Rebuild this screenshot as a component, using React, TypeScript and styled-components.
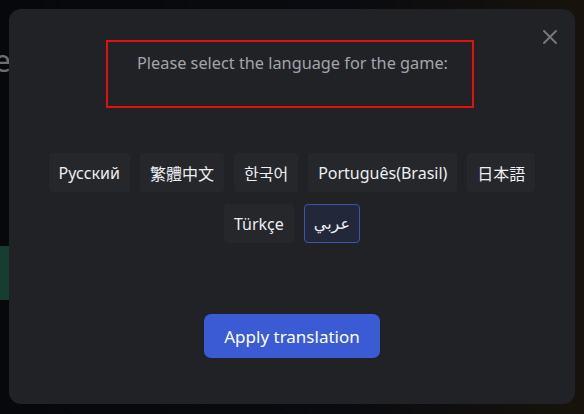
import React, { useState } from "react";
import styled, { createGlobalStyle } from "styled-components";

const GlobalStyle = createGlobalStyle`
  html, body {
    margin: 0;
    padding: 0;
    background: #08090c;
  }
  body {
    font-family: "Noto Sans", "Noto Sans CJK TC", "DejaVu Sans", sans-serif;
  }
`;

const LANGUAGES = [
  { code: "ru", label: "Русский" },
  { code: "zh-TW", label: "繁體中文", font: "Noto Sans CJK TC" },
  { code: "ko", label: "한국어", font: "Noto Sans CJK KR" },
  { code: "pt-BR", label: "Português(Brasil)" },
  { code: "ja", label: "日本語", font: "Noto Sans CJK JP" },
  { code: "tr", label: "Türkçe" },
  { code: "ar", label: "عربي", font: "DejaVu Sans" },
];

const Backdrop = styled.div`
  position: relative;
  width: 584px;
  height: 414px;
  box-sizing: border-box;
  padding: 9px 9px 10px 9px;
  overflow: hidden;
  background: linear-gradient(90deg, #07080b 0%, #0a0b10 60%, #17130c 100%);
`;

/* bits of the page behind the modal */
const GhostLetter = styled.span`
  position: absolute;
  left: -6px;
  top: 40px;
  font-size: 30px;
  color: #6b6d72;
`;

const GreenStrip = styled.div`
  position: absolute;
  left: 0;
  top: 246px;
  width: 10px;
  height: 54px;
  background: #163d30;
`;

const Dialog = styled.div`
  position: relative;
  height: 100%;
  box-sizing: border-box;
  background: #212226;
  border-radius: 12px;
  display: flex;
  flex-direction: column;
  align-items: center;
  padding-top: 31px;
`;

const CloseButton = styled.button`
  position: absolute;
  top: 18px;
  right: 15px;
  width: 20px;
  height: 20px;
  padding: 0;
  border: 0;
  background: none;
  color: #75777c;
  cursor: pointer;
  display: flex;
  align-items: center;
  justify-content: center;
`;

const Prompt = styled.div`
  width: 368px;
  height: 68px;
  margin-right: 5px;
  box-sizing: border-box;
  border: 2px solid #e31010;
  text-align: center;
  padding: 10px 0 0 6px;
  font-size: 16.3px;
  color: #a2a5aa;
`;

const LanguageList = styled.div`
  margin-top: 45px;
  max-width: 520px;
  display: flex;
  flex-wrap: wrap;
  justify-content: center;
  gap: 12px 10px;
`;

const LanguageButton = styled.button<{ $active?: boolean; $font?: string }>`
  height: 39px;
  box-sizing: border-box;
  padding: 0 9px;
  border-radius: 4px;
  border: 1px solid ${({ $active }) => ($active ? "#3a55ad" : "transparent")};
  background: ${({ $active }) => ($active ? "#222839" : "#26272b")};
  color: #eceef1;
  font-size: 16px;
  font-family: ${({ $font }) =>
    $font ? `"${$font}", "Noto Sans", sans-serif` : `"Noto Sans", sans-serif`};
  cursor: pointer;
`;

const ApplyButton = styled.button`
  margin-top: 71px;
  width: 176px;
  height: 44px;
  border: 0;
  border-radius: 7px;
  background: #3a5bd4;
  color: #ffffff;
  font-size: 17px;
  font-family: "Noto Sans", sans-serif;
  cursor: pointer;
`;

export default function App() {
  const [selected, setSelected] = useState("ar");

  return (
    <>
      <GlobalStyle />
      <Backdrop>
        <GhostLetter>e</GhostLetter>
        <GreenStrip />
        <Dialog>
          <CloseButton aria-label="Close">
            <svg width="16" height="16" viewBox="0 0 16 16">
              <path
                d="M2 2 L14 14 M14 2 L2 14"
                stroke="currentColor"
                strokeWidth="2"
                strokeLinecap="round"
              />
            </svg>
          </CloseButton>
          <Prompt>Please select the language for the game:</Prompt>
          <LanguageList>
            {LANGUAGES.map((lang) => (
              <LanguageButton
                key={lang.code}
                $font={lang.font}
                $active={selected === lang.code}
                onClick={() => setSelected(lang.code)}
              >
                {lang.label}
              </LanguageButton>
            ))}
          </LanguageList>
          <ApplyButton>Apply translation</ApplyButton>
        </Dialog>
      </Backdrop>
    </>
  );
}
